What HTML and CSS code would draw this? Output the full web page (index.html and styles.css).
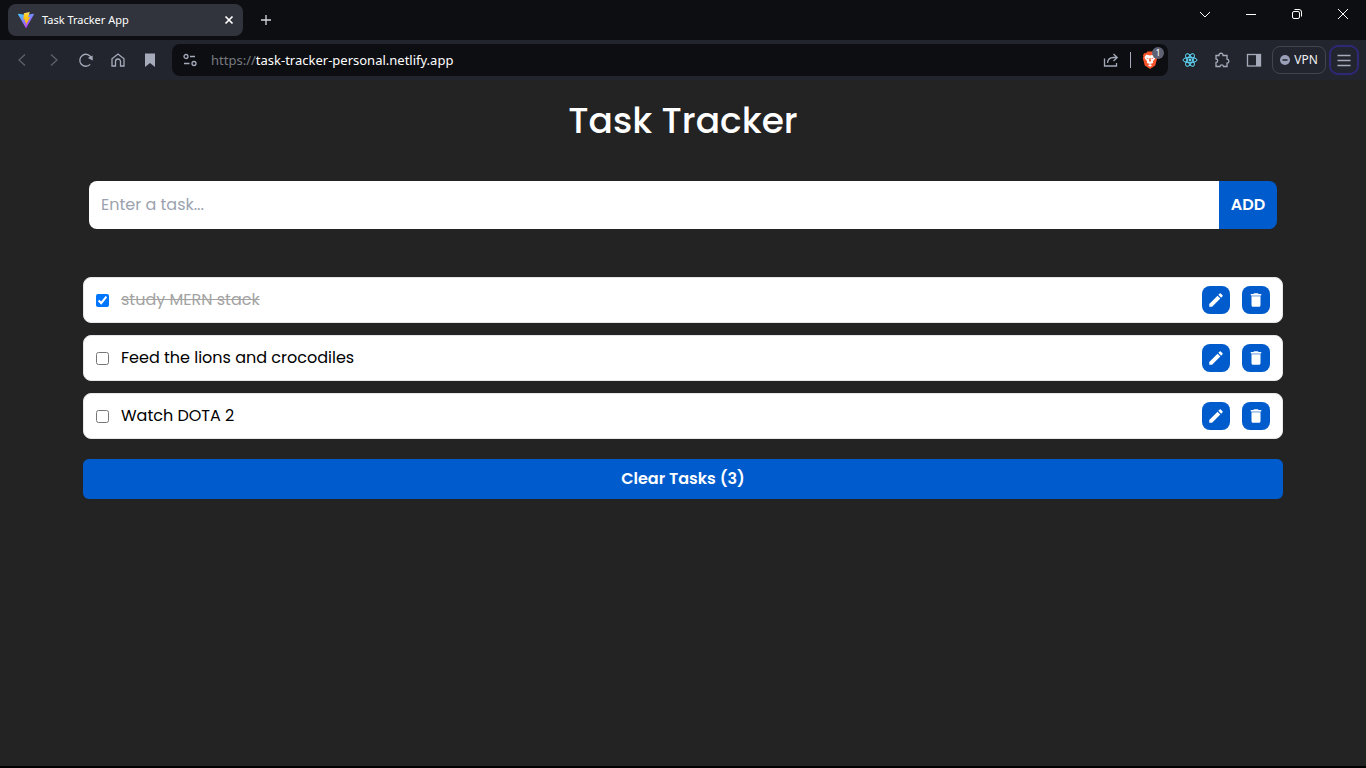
FILE: index.html
```html
<!DOCTYPE html>
<html lang="en">
<head>
<meta charset="utf-8">
<meta name="viewport" content="width=device-width, initial-scale=1">
<title>Task Tracker App</title>
<link rel="stylesheet" href="styles.css">
</head>
<body>
<svg class="sprite" aria-hidden="true">
  <symbol id="pencil" viewBox="0 0 24 24"><path d="M3 17.250V21h3.750L17.810 9.940l-3.750-3.750L3 17.250zM20.710 7.040a1 1 0 0 0 0-1.410l-2.340-2.340a1 1 0 0 0-1.410 0l-1.830 1.830 3.750 3.750 1.830-1.830z"/></symbol>
  <symbol id="trash" viewBox="0 0 24 24"><path d="M6 19c0 1.100.9 2 2 2h8c1.100 0 2-.9 2-2V7.500H6V19zM19 4h-3.500l-1-1h-5l-1 1H5v2h14V4z"/><path opacity=".65" d="M6 6h12v2H6z"/></symbol>
</svg>
<header class="browser">
  <div class="tabstrip">
    <div class="tab">
      <svg class="icon" viewBox="0 0 16 16" aria-hidden="true">
        <defs>
          <linearGradient id="v" x1="0" y1="0" x2=".6" y2="1"><stop offset="0" stop-color="#41d1ff"/><stop offset="1" stop-color="#bd34fe"/></linearGradient>
          <linearGradient id="b" x1="0" y1="0" x2="0" y2="1"><stop offset="0" stop-color="#ffea83"/><stop offset=".2" stop-color="#ffcf20"/><stop offset="1" stop-color="#ffa800"/></linearGradient>
        </defs>
        <path fill="url(#v)" d="M15.900 2.400 8.400 15.700a.5.5 0 0 1-.8 0L.1 2.400a.4.4 0 0 1 .4-.6L8 3.100l7.500-1.300a.4.4 0 0 1 .4.6z"/>
        <path fill="url(#b)" d="M11.800 0 5.900 1.200l-.5 6.700 2-.4-.6 2.700 1.300-.3-.7 4.200 4.800-9.200-2.200.4z"/>
      </svg>
      <span class="tab-title">Task Tracker App</span>
      <button class="plain" aria-label="Close tab"><svg class="icon" viewBox="0 0 16 16"><path class="line bold" d="m4.500 4.500 7 7m0-7-7 7"/></svg></button>
    </div>
    <button class="plain new-tab" aria-label="New tab"><svg class="icon" viewBox="0 0 16 16"><path class="line medium" d="M8 3v10M3 8h10"/></svg></button>
    <div class="window-controls">
      <button class="plain" aria-label="Search tabs"><svg class="icon" viewBox="0 0 16 16"><path class="line" d="m3 6 5 5 5-5"/></svg></button>
      <button class="plain" aria-label="Minimize"><svg class="icon" viewBox="0 0 16 16"><path class="line" d="M3 8.500h10"/></svg></button>
      <button class="plain" aria-label="Restore"><svg class="icon" viewBox="0 0 16 16"><rect class="line" x="3.500" y="5.500" width="7" height="7" rx="1.500"/><path class="line" d="M5.500 3.500H10a2.500 2.500 0 0 1 2.500 2.500v4.500"/></svg></button>
      <button class="plain" aria-label="Close window"><svg class="icon" viewBox="0 0 16 16"><path class="line" d="m3 3 10 10m0-10L3 13"/></svg></button>
    </div>
  </div>
  <div class="toolbar">
    <nav class="nav" aria-label="Browser navigation">
      <button class="plain dim" aria-label="Back"><svg class="icon" viewBox="0 0 16 16"><path class="line medium" d="M11 2.500 5 8l6 5.500"/></svg></button>
      <button class="plain dim" aria-label="Forward"><svg class="icon" viewBox="0 0 16 16"><path class="line medium" d="M5 2.500 11 8l-6 5.500"/></svg></button>
      <button class="plain" aria-label="Reload"><svg class="icon" viewBox="0 0 16 16"><path class="line medium" d="M12.200 12.400A6 6 0 1 1 13.400 6"/><path fill="currentColor" d="M9.800 6 14.600 3.600l.2 5z"/></svg></button>
      <button class="plain" aria-label="Home"><svg class="icon" viewBox="0 0 16 16"><path class="line medium" d="M2 14V6.800L8 2l6 4.800V14h-3.500V9.500a2.500 2.500 0 0 0-5 0V14z"/></svg></button>
      <button class="plain" aria-label="Bookmark"><svg class="icon" viewBox="0 0 16 16"><path fill="currentColor" d="M3 1.500h10v13.500l-5-4-5 4z"/></svg></button>
    </nav>
    <div class="address">
      <svg class="icon" viewBox="0 0 16 16" aria-hidden="true"><circle class="line medium" cx="4" cy="4.500" r="2"/><path class="line medium" d="M8 4.500h5M2 11.500h5.500"/><circle class="line medium" cx="12" cy="11.500" r="2"/></svg>
      <span class="url"><span class="scheme">https://</span>task-tracker-personal.netlify.app</span>
      <button class="plain" aria-label="Share"><svg class="icon" viewBox="0 0 16 16"><path class="line medium" d="M1.500 6.500V14h12v-3M4.500 11c.3-3.500 2-5.500 6-5.500h3.500M10.500 2l3.700 3.500-3.700 3.500"/></svg></button>
      <span class="divider"></span>
      <button class="plain shield" aria-label="Brave Shields">
        <svg class="shield-icon" viewBox="0 0 16 18"><path fill="#fb542b" d="m15 4-1.500-2-1.500.2L10.500.5h-5L4 2.200 2.500 2 1 4l.4 1.500L.8 7l2 7.500L8 18l5.200-3.500 2-7.500-.6-1.500z"/><path fill="#fff" d="m8 4.500 2-.5 1.500-.5 2 2.500-.4 1.500-2.300 3 .4 1.500L8 13l-3.200-1 .4-1.500-2.300-3L2.500 6l2-2.500L6 4zM8 13l2 1.200-2 1.500-2-1.500z"/><path fill="#fb542b" d="m3.900 6.500 2.600.8-.3.900zm8.200 0-2.600.8.3.9zM7.500 7h1l.5 3-1 .7-1-.7z"/></svg>
        <span class="badge">1</span>
      </button>
    </div>
    <div class="extensions">
      <button class="plain react" aria-label="React Developer Tools"><svg class="icon" viewBox="0 0 16 16"><g fill="none" stroke="#61dafb"><ellipse cx="8" cy="8" rx="7" ry="2.700"/><ellipse cx="8" cy="8" rx="7" ry="2.700" transform="rotate(60 8 8)"/><ellipse cx="8" cy="8" rx="7" ry="2.700" transform="rotate(120 8 8)"/></g><circle cx="8" cy="8" r="1.400" fill="#61dafb"/></svg></button>
      <button class="plain" aria-label="Extensions"><svg class="icon" viewBox="0 0 16 16"><path class="line medium" d="M2 3.500h3c-.3-3 4.300-3 4 0h4v3.700c2.500.2 2.500 3.800 0 4v3.300H9.500c-.3-2.200-3.200-2.200-3.500 0H2v-4c2.300-.3 2.300-3.200 0-3.500z"/></svg></button>
      <button class="plain" aria-label="Sidebar"><svg class="icon" viewBox="0 0 16 16"><rect class="line medium" x="1.500" y="2.500" width="13" height="11.500"/><path fill="currentColor" d="M10 2.500h4.500V14H10z"/></svg></button>
    </div>
    <button class="vpn"><svg class="vpn-icon" viewBox="0 0 10 10" aria-hidden="true"><circle cx="5" cy="5" r="5" fill="#9b9fb8"/><path stroke="#22252d" stroke-width="1.500" d="M2.500 5h5"/></svg>VPN</button>
    <button class="menu" aria-label="Menu"><svg class="icon" viewBox="0 0 16 16"><path class="line medium" d="M1.500 3.500h13M1.500 8.500h13M1.500 13.500h13"/></svg></button>
  </div>
</header>
<main class="app">
  <h1>Task Tracker</h1>
  <form class="add-form">
    <input type="text" aria-label="Task" placeholder="Enter a task...">
    <button type="button">ADD</button>
  </form>
  <ul class="tasks">
    <li class="task">
      <input type="checkbox" id="t1" checked><label for="t1">study MERN stack</label>
      <button class="action" aria-label="Edit task"><svg class="action-icon"><use href="#pencil"/></svg></button>
      <button class="action" aria-label="Delete task"><svg class="action-icon"><use href="#trash"/></svg></button>
    </li>
    <li class="task">
      <input type="checkbox" id="t2"><label for="t2">Feed the lions and crocodiles</label>
      <button class="action" aria-label="Edit task"><svg class="action-icon"><use href="#pencil"/></svg></button>
      <button class="action" aria-label="Delete task"><svg class="action-icon"><use href="#trash"/></svg></button>
    </li>
    <li class="task">
      <input type="checkbox" id="t3"><label for="t3">Watch DOTA 2</label>
      <button class="action" aria-label="Edit task"><svg class="action-icon"><use href="#pencil"/></svg></button>
      <button class="action" aria-label="Delete task"><svg class="action-icon"><use href="#trash"/></svg></button>
    </li>
  </ul>
  <button class="clear">Clear Tasks (3)</button>
</main>
</body>
</html>
```
FILE: styles.css
```css
* { box-sizing: border-box; }

body {
  margin: 0;
  min-height: 100vh;
  display: flex;
  flex-direction: column;
  background: #232323;
  border-bottom: 2px solid #000;
  font-family: Poppins, Inter, sans-serif;
  font-size: 16px;
  line-height: 24px;
}

button, input { font: inherit; margin: 0; }
button { border: 0; padding: 0; cursor: pointer; color: inherit; }

.sprite { position: absolute; width: 0; height: 0; }
.icon { display: block; width: 16px; height: 16px; flex: none; }
.line { fill: none; stroke: currentColor; stroke-width: 1; }
.line.medium { stroke-width: 1.3; }
.line.bold { stroke-width: 1.7; }
.plain { background: none; flex: none; }

.browser {
  font-family: "Segoe UI", "Noto Sans", sans-serif;
  font-size: 12px;
  line-height: 16px;
  color: #fff;
}

.tabstrip {
  display: flex;
  align-items: center;
  height: 40px;
  padding-left: 8px;
  background: #0d0e12;
}
.tab {
  display: flex;
  align-items: center;
  gap: 8px;
  width: 235px;
  height: 32px;
  padding: 0 6px 0 10px;
  border-radius: 8px;
  background: #31343c;
}
.tab-title { flex: 1; font-size: 11px; white-space: nowrap; }
.new-tab { margin-left: 15px; color: #d5d7dc; }
.window-controls {
  display: flex;
  gap: 30px;
  align-self: flex-start;
  margin-left: auto;
  padding: 6px 15px 0 0;
}

.toolbar {
  display: flex;
  align-items: center;
  height: 40px;
  padding: 0 8px 0 14px;
  background: #22252d;
  color: #a5abba;
}
.nav { display: flex; gap: 16px; margin-right: 14px; }
.dim { color: #5d616c; }
.address {
  flex: 1;
  display: flex;
  align-items: center;
  height: 32px;
  padding: 0 8px 0 10px;
  border-radius: 8px;
  background: #0d0e12;
}
.url {
  flex: 1;
  margin-left: 13px;
  font-size: 13px;
  color: #fff;
  white-space: nowrap;
}
.scheme { color: #777a80; }
.divider { width: 1px; height: 16px; margin: 0 11px; background: #a5abba; }
.shield { position: relative; width: 18px; height: 18px; }
.shield-icon { display: block; width: 16px; height: 18px; }
.badge {
  position: absolute;
  top: -4px;
  right: -4px;
  width: 12px;
  height: 12px;
  border-radius: 6px;
  background: #5f6273;
  color: #fff;
  font-size: 9px;
  line-height: 12px;
}
.extensions { display: flex; gap: 16px; margin: 0 10px 0 14px; }
.react { background: #20232a; }
.vpn {
  display: flex;
  align-items: center;
  justify-content: center;
  gap: 4px;
  width: 54px;
  height: 28px;
  border: 1px solid #42454f;
  border-radius: 8px;
  background: none;
  color: #f0f1f4;
}
.vpn-icon { width: 10px; height: 10px; }
.menu {
  display: grid;
  place-items: center;
  width: 28px;
  height: 28px;
  margin-left: 4px;
  border-radius: 8px;
  outline: 2px solid #2d2877;
  outline-offset: -1px;
  background: none;
}

.app {
  width: calc(100% - 166px);
  max-width: 1200px;
  margin: 0 auto;
  padding-top: 21px;
}
h1 {
  margin: 0;
  color: #fff;
  font-size: 36px;
  font-weight: 500;
  line-height: 40px;
  text-align: center;
}
.add-form { display: flex; margin: 40px 6px 48px; }
.add-form input {
  flex: 1;
  min-width: 0;
  height: 48px;
  padding: 0 12px 1px;
  border: 0;
  border-radius: 8px 0 0 8px;
  background: #fff;
}
.add-form input::placeholder { color: #9ca3af; opacity: 1; }
.add-form button {
  width: 58px;
  border-radius: 0 8px 8px 0;
  background: #005ccc;
  color: #fff;
  font-weight: 600;
}
.tasks {
  display: grid;
  gap: 12px;
  margin: 0 0 20px;
  padding: 0;
  list-style: none;
}
.task {
  display: flex;
  align-items: center;
  gap: 12px;
  height: 46px;
  padding: 0 12px;
  border: 1px solid #e5e7eb;
  border-radius: 8px;
  background: #fff;
}
.task input { width: 13px; height: 13px; accent-color: #0075ff; }
.task label { flex: 1; }
.task input:checked + label { color: #a3a3a3; text-decoration: line-through; }
.action {
  display: grid;
  place-items: center;
  width: 28px;
  height: 28px;
  border-radius: 8px;
  background: #005ccc;
  fill: #fff;
}
.action-icon { display: block; width: 18px; height: 18px; }
.clear {
  display: block;
  width: 100%;
  height: 40px;
  border-radius: 6px;
  background: #005ccc;
  color: #fff;
  font-weight: 600;
}
```
